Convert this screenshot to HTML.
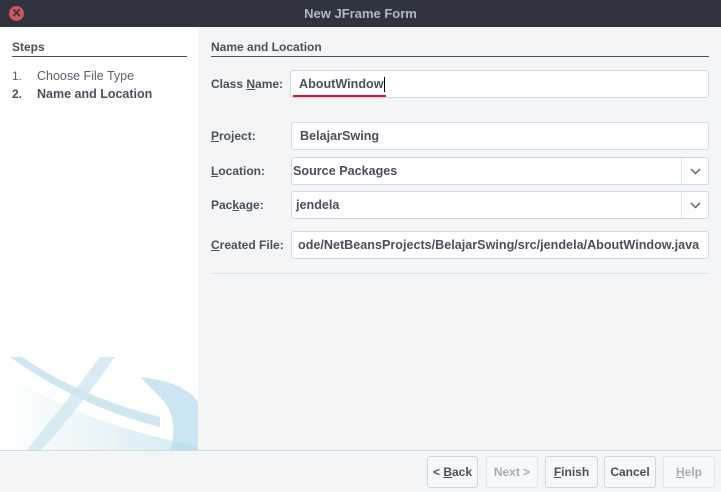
<!DOCTYPE html>
<html><head><style>
body{margin:0;width:721px;height:492px;overflow:hidden;background:#f4f5f7;font-family:"Liberation Sans",sans-serif;font-size:12px;color:#4b4f5a;position:relative}
div{position:absolute;box-sizing:border-box}
.b{font-weight:bold}
.fld{background:#fff;border:1px solid #cfd6e6;border-radius:3px;height:28px;line-height:26px;padding-left:8px;font-weight:bold;color:#4b4f5a;white-space:nowrap;overflow:hidden;font-size:12.6px}
.lbl{left:211px;font-weight:bold;color:#4b4f5a}
.dd{position:absolute;right:0;top:0;width:27px;height:26px;border-left:1px solid #e5e8ef}
.btn{top:456px;height:32px;border:1px solid #cfd6e6;border-radius:3px;background:#f7f8fa;line-height:30px;text-align:center;font-weight:bold;font-size:12px}
u{text-decoration:underline}
</style></head><body>
<div style="left:0;top:0;width:721px;height:27px;background:#2f343f"></div>
<div style="left:9px;top:6px;width:15px;height:15px;border-radius:50%;background:#cc575d;color:#2f343f;font-size:12px;line-height:15px;text-align:center;font-weight:bold">✕</div>
<div style="left:0;top:6px;width:721px;text-align:center;color:#afb8c6;font-weight:bold;font-size:13px">New JFrame Form</div>
<div style="left:0;top:27px;width:198px;height:423px;background:#fff;overflow:hidden">
 <div class="b" style="left:12px;top:13px">Steps</div>
 <div style="left:12px;top:29px;width:175px;height:1px;background:#4b4f5a"></div>
 <div style="left:12px;top:42px;color:#5c616c">1.</div><div style="left:37px;top:42px;color:#5c616c;font-size:12.5px">Choose File Type</div>
 <div class="b" style="left:12px;top:60px">2.</div><div class="b" style="left:37px;top:60px;font-size:12.5px">Name and Location</div>
 <svg style="position:absolute;left:0;top:330px" width="198" height="95" viewBox="0 0 198 95">
  <defs><linearGradient id="g" x1="0" x2="1"><stop offset="0" stop-color="#fff"/><stop offset="1" stop-color="#b5dce9"/></linearGradient></defs>
  <path d="M0 10 Q60 60 198 90 L198 95 L0 95Z" fill="url(#g)" opacity=".6"/>
  <path d="M10 0 L22 0 Q80 40 160 60 L160 70 Q80 50 10 0Z" fill="#cfe7f0"/>
  <path d="M100 0 L115 0 Q80 50 40 95 L25 95 Q70 40 100 0Z" fill="#cfe7f0" opacity=".8"/>
  <path d="M140 20 Q185 25 198 45 L198 95 L170 95 Q180 60 160 40 Z" fill="#b5dce9" opacity=".7"/>
 </svg>
</div>
<div class="b" style="left:211px;top:40px">Name and Location</div>
<div style="left:211px;top:56px;width:498px;height:1px;background:#4b4f5a"></div>
<div class="lbl" style="top:77px">Class <u>N</u>ame:</div>
<div class="fld" style="left:290px;top:70px;width:419px">AboutWindow<span style="display:inline-block;width:1px;height:15px;background:#000;vertical-align:middle"></span></div>
<div style="left:293px;top:95px;width:93px;height:2px;background:#e0103a"></div>
<div class="lbl" style="top:129px"><u>P</u>roject:</div>
<div class="fld" style="left:291px;top:122px;width:418px">BelajarSwing</div>
<div class="lbl" style="top:164px"><u>L</u>ocation:</div>
<div class="fld" style="left:291px;top:157px;width:418px;padding-left:1px">Source Packages<div class="dd"><svg width="27" height="26"><path d="M9 11l4.5 4.5L18 11" stroke="#5c616c" stroke-width="1.5" fill="none"/></svg></div></div>
<div class="lbl" style="top:198px">Pac<u>k</u>age:</div>
<div class="fld" style="left:291px;top:191px;width:418px;padding-left:4px">jendela<div class="dd"><svg width="27" height="26"><path d="M9 11l4.5 4.5L18 11" stroke="#5c616c" stroke-width="1.5" fill="none"/></svg></div></div>
<div class="lbl" style="top:238px"><u>C</u>reated File:</div>
<div class="fld" style="left:291px;top:231px;width:418px;padding-left:6px">ode/NetBeansProjects/BelajarSwing/src/jendela/AboutWindow.java</div>
<div style="left:211px;top:273px;width:498px;height:1px;background:#dcdfe5"></div>
<div style="left:0;top:450px;width:721px;height:1px;background:#d5d9e0"></div>
<div class="btn" style="left:427px;width:51px">&lt; <u>B</u>ack</div>
<div class="btn" style="left:486px;width:52px;color:#a8acb5;border-color:#e0e4ec">Next &gt;</div>
<div class="btn" style="left:545px;width:53px"><u>F</u>inish</div>
<div class="btn" style="left:604px;width:52px">Cancel</div>
<div class="btn" style="left:663px;width:52px;color:#a8acb5;border-color:#e0e4ec"><u>H</u>elp</div>
</body></html>
